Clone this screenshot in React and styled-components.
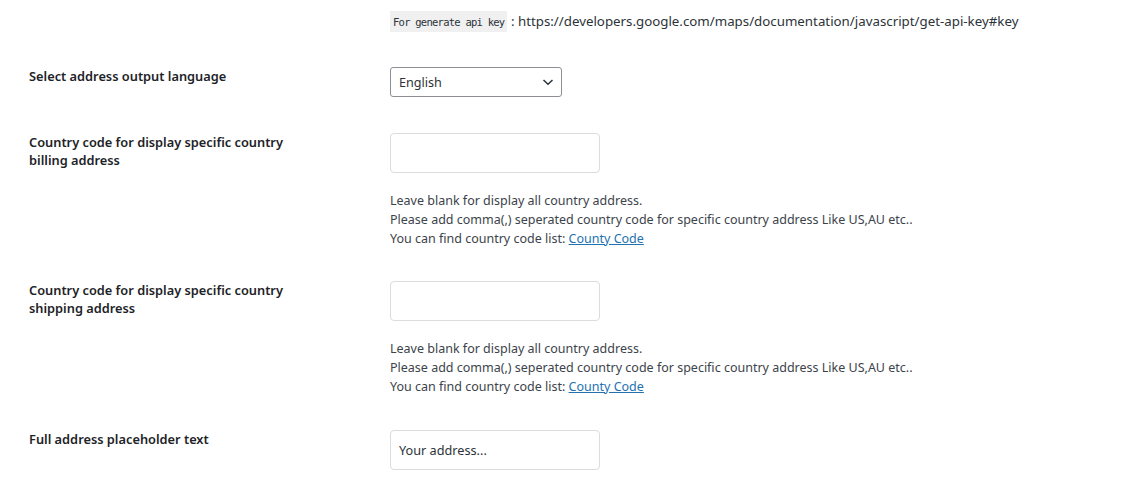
import React from "react";
import styled, { createGlobalStyle } from "styled-components";

const GlobalStyle = createGlobalStyle`
  body {
    margin: 0;
    background: #fff;
    font-family: "Noto Sans", "Open Sans", sans-serif;
    color: #3c434a;
  }
`;

const Form = styled.div`
  display: flex;
  flex-direction: column;
  padding: 11px 0 20px 29px;
`;

const Row = styled.div`
  display: grid;
  grid-template-columns: 361px 1fr;
  align-items: start;
  margin-top: ${(p) => p.$top || 0}px;
`;

const Label = styled.div`
  max-width: 290px;
  font-size: 12.8px;
  font-weight: 600;
  line-height: 18px;
  color: #1d2327;
`;

const Field = styled.div`
  display: flex;
  flex-direction: column;
  align-items: flex-start;
`;

const KeyLine = styled.div`
  font-size: 13.3px;
  line-height: 21px;
  height: 21px;
  color: #2c3338;
`;

const Code = styled.code`
  display: inline-block;
  vertical-align: top;
  height: 21px;
  padding: 0 3px;
  background: #f0f0f1;
  font-family: "DejaVu Sans Mono", "Liberation Mono", monospace;
  font-size: 10.5px;
  letter-spacing: -0.75px;
  line-height: 22px;
  color: #2c3338;
`;

const SelectWrap = styled.div`
  position: relative;
  width: 172px;
`;

const Select = styled.select`
  appearance: none;
  display: block;
  width: 172px;
  height: 30px;
  padding: 0 24px 0 8px;
  border: 1px solid #8c8f94;
  border-radius: 3px;
  background: #fff;
  font-family: inherit;
  font-size: 12.6px;
  color: #2c3338;
  box-sizing: border-box;
`;

const Chevron = styled.svg`
  position: absolute;
  right: 8px;
  top: 10px;
  pointer-events: none;
`;

const Input = styled.input`
  display: block;
  width: 210px;
  height: 40px;
  padding: 0 8px;
  border: 1px solid #dcdcde;
  border-radius: 4px;
  background: #fff;
  font-family: inherit;
  font-size: 12.7px;
  color: #2c3338;
  box-sizing: border-box;
  outline: none;
`;

const Description = styled.p`
  margin: 18px 0 0;
  font-size: 12.5px;
  line-height: 19px;
  color: #3c434a;

  a {
    color: #2271b1;
    text-decoration: underline;
  }
`;

const CountryHelp = () => (
  <Description>
    Leave blank for display all country address.
    <br />
    Please add comma(,) seperated country code for specific country address Like US,AU etc..
    <br />
    You can find country code list: <a href="#">County Code</a>
  </Description>
);

export default function App() {
  return (
    <>
      <GlobalStyle />
      <Form>
        <Row>
          <div />
          <KeyLine>
            <Code>For generate api key</Code> : https://developers.google.com/maps/documentation/javascript/get-api-key#key
          </KeyLine>
        </Row>
        <Row $top={35}>
          <Label>Select address output language</Label>
          <Field>
            <SelectWrap>
              <Select defaultValue="en">
                <option value="en">English</option>
              </Select>
              <Chevron width="12" height="10" viewBox="0 0 12 10">
                <path d="M1.5 3 L6 7.2 L10.5 3" fill="none" stroke="#2c3338" strokeWidth="1.5" />
              </Chevron>
            </SelectWrap>
          </Field>
        </Row>
        <Row $top={36}>
          <Label>Country code for display specific country billing address</Label>
          <Field>
            <Input type="text" defaultValue="" />
            <CountryHelp />
          </Field>
        </Row>
        <Row $top={33}>
          <Label>Country code for display specific country shipping address</Label>
          <Field>
            <Input type="text" defaultValue="" />
            <CountryHelp />
          </Field>
        </Row>
        <Row $top={34}>
          <Label>Full address placeholder text</Label>
          <Field>
            <Input type="text" defaultValue="Your address..." />
          </Field>
        </Row>
      </Form>
    </>
  );
}
